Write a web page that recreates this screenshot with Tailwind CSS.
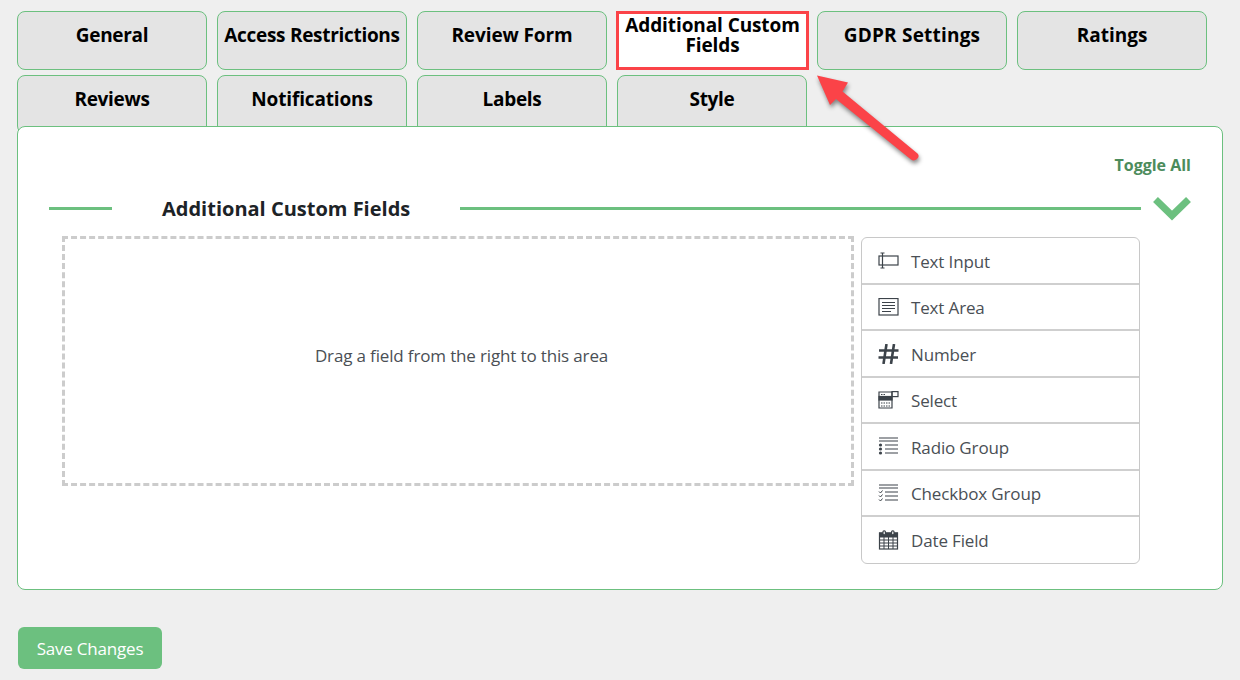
<!DOCTYPE html>
<html lang="en">
<head>
  <meta charset="UTF-8">
  <title>Additional Custom Fields</title>
  <script src="https://cdn.jsdelivr.net/npm/@tailwindcss/browser@4"></script>
</head>
<body class="bg-[#efefef] w-[1240px] h-[680px] overflow-hidden relative font-['Open_Sans',sans-serif]">
  <!-- Tabs -->
  <div class="pl-[17px] pt-[11px]">
    <div class="flex gap-[10px] h-[59px]">
      <button class="w-[190px] h-[59px] pt-[9px] flex justify-center items-start bg-[#e4e4e4] border border-[#6cc07f] rounded-[8px] text-black text-[19px] leading-[28px] font-bold tracking-[-0.3px]">General</button>
      <button class="w-[190px] h-[59px] pt-[9px] flex justify-center items-start bg-[#e4e4e4] border border-[#6cc07f] rounded-[8px] text-black text-[19px] leading-[28px] font-bold tracking-[-0.3px]">Access Restrictions</button>
      <button class="w-[190px] h-[59px] pt-[9px] flex justify-center items-start bg-[#e4e4e4] border border-[#6cc07f] rounded-[8px] text-black text-[19px] leading-[28px] font-bold tracking-[-0.1px]">Review Form</button>
      <button class="w-[193px] h-[59px] -ml-[1px] -mr-[2px] pt-[1px] flex items-start justify-center text-center bg-white border-[3px] border-[#fb4348] text-black text-[19px] leading-[20px] font-bold tracking-[-0.1px]">Additional Custom<br>Fields</button>
      <button class="w-[190px] h-[59px] pt-[9px] flex justify-center items-start bg-[#e4e4e4] border border-[#6cc07f] rounded-[8px] text-black text-[19px] leading-[28px] font-bold tracking-[0.2px]">GDPR Settings</button>
      <button class="w-[190px] h-[59px] pt-[9px] flex justify-center items-start bg-[#e4e4e4] border border-[#6cc07f] rounded-[8px] text-black text-[19px] leading-[28px] font-bold">Ratings</button>
    </div>
    <div class="flex gap-[10px] h-[51px] mt-[5px]">
      <button class="w-[190px] h-[59px] pt-[9px] flex justify-center items-start bg-[#e4e4e4] border border-[#6cc07f] rounded-[8px] text-black text-[19px] leading-[28px] font-bold tracking-[-0.3px]">Reviews</button>
      <button class="w-[190px] h-[59px] pt-[9px] flex justify-center items-start bg-[#e4e4e4] border border-[#6cc07f] rounded-[8px] text-black text-[19px] leading-[28px] font-bold tracking-[-0.15px]">Notifications</button>
      <button class="w-[190px] h-[59px] pt-[9px] flex justify-center items-start bg-[#e4e4e4] border border-[#6cc07f] rounded-[8px] text-black text-[19px] leading-[28px] font-bold tracking-[-0.3px]">Labels</button>
      <button class="w-[190px] h-[59px] pt-[9px] flex justify-center items-start bg-[#e4e4e4] border border-[#6cc07f] rounded-[8px] text-black text-[19px] leading-[28px] font-bold tracking-[-0.3px]">Style</button>
    </div>
  </div>

  <!-- Panel -->
  <div class="relative ml-[17px] w-[1206px] h-[464px] bg-white border border-[#6cc07f] rounded-[8px]">
    <div class="flex justify-end pt-[27px] pr-[31px] h-[68px]">
      <span class="text-[#4c8c5c] text-[16px] leading-[22px] font-bold">Toggle All</span>
    </div>
    <!-- Section heading -->
    <div class="flex items-center pl-[31px] h-[26px]">
      <div class="w-[63px] h-[3px] bg-[#6cc07f]"></div>
      <h2 class="w-[348px] mt-[2px] pl-[50px] text-[#1d2327] text-[20px] leading-[26px] font-bold">Additional Custom Fields</h2>
      <div class="w-[681px] h-[3px] bg-[#6cc07f]"></div>
      <svg class="ml-[12px]" width="38" height="26" viewBox="0 0 38 26" fill="none">
        <path d="M2.5 4.5 L19 20.5 L35.5 4.5" stroke="#6cc07f" stroke-width="7"/>
      </svg>
    </div>
    <div class="flex pl-[44px] pt-[15px]">
      <!-- Drop area -->
      <div class="w-[792px] h-[250px] pl-[7px] pb-[10px] border-[3px] border-dashed border-[#cccccc] flex items-center justify-center text-[#4a4f55] text-[17px] tracking-[-0.15px]">
        Drag a field from the right to this area
      </div>
      <!-- Field list -->
      <ul class="ml-[7px] w-[279px] h-[327px] mt-[1px] border border-[#c8c8c8] rounded-[6px] text-[#4a4f55] text-[17px] tracking-[-0.15px] flex flex-col">
        <li class="h-[46.5px] border-b-2 border-[#cfcfcf] flex items-center pl-[16px] gap-[12px]">
          <svg class="mt-[1px]" width="21" height="18" viewBox="0 0 21 18" fill="none" stroke="#3c434a" stroke-width="1.2"><rect x="1" y="4" width="19" height="9"/><path d="M4.5 1V16M2.500 1H6.500M2.500 16H6.500"/></svg>
          <span class="mt-[2px]">Text Input</span>
        </li>
        <li class="h-[46.5px] border-b-2 border-[#cfcfcf] flex items-center pl-[16px] gap-[12px]">
          <svg width="21" height="18" viewBox="0 0 21 18" fill="none" stroke="#3c434a" stroke-width="1.2"><rect x="1" y="0.5" width="19" height="16.5"/><path d="M4 4.5H17M4 7.5H17M4 10.5H17M4 13.5H13"/></svg>
          <span class="mt-[2px]">Text Area</span>
        </li>
        <li class="h-[46.5px] border-b-2 border-[#cfcfcf] flex items-center pl-[16px] gap-[12px]">
          <svg class="mt-[1px]" width="21" height="20" viewBox="0 0 21 20" fill="none" stroke="#3c434a" stroke-width="2.6"><path d="M8.500 0L5.500 20M16 0L13 20M1 6.500H20.500M0.500 13.500H20"/></svg>
          <span class="mt-[2px]">Number</span>
        </li>
        <li class="h-[46.5px] border-b-2 border-[#cfcfcf] flex items-center pl-[16px] gap-[12px]">
          <svg width="21" height="18" viewBox="0 0 21 18" fill="none" stroke="#3c434a" stroke-width="1.2"><path d="M1 1H14V17H1Z"/><rect x="14" y="0.6" width="6" height="5"/><rect x="1" y="5.5" width="13" height="3.5" fill="#3c434a"/><path d="M3 3.500H8M3 12H12M3 15H12" stroke-dasharray="1.5 1"/></svg>
          <span class="mt-[2px]">Select</span>
        </li>
        <li class="h-[46.5px] border-b-2 border-[#cfcfcf] flex items-center pl-[16px] gap-[12px]">
          <svg width="21" height="18" viewBox="0 0 21 18" fill="none" stroke="#3c434a" stroke-width="1.2"><path d="M1 1H20M1 4H20M7 8H20M7 12H20M7 16H20"/><circle cx="2.500" cy="8" r="1.6" fill="#3c434a" stroke="none"/><circle cx="2.500" cy="12" r="1.6" fill="#3c434a" stroke="none"/><circle cx="2.500" cy="16" r="1.6" fill="#3c434a" stroke="none"/></svg>
          <span class="mt-[2px]">Radio Group</span>
        </li>
        <li class="h-[46.5px] border-b-2 border-[#cfcfcf] flex items-center pl-[16px] gap-[12px]">
          <svg width="21" height="18" viewBox="0 0 21 18" fill="none" stroke="#3c434a" stroke-width="1.2"><path d="M1 1H20M1 4H20M7 8H20M7 12H20M7 16H20"/><path d="M1 7.500L2.500 9L4.500 6.500M1 11.500L2.500 13L4.500 10.500M1 15.500L2.500 17L4.500 14.500" stroke-width="1"/></svg>
          <span class="mt-[2px]">Checkbox Group</span>
        </li>
        <li class="h-[46px] flex items-center pl-[16px] gap-[12px]">
          <svg width="21" height="20" viewBox="0 0 21 20" fill="none" stroke="#3c434a" stroke-width="1"><rect x="1.500" y="3" width="18" height="16" stroke-width="1.2"/><rect x="1.500" y="3" width="18" height="4" fill="#3c434a"/><path d="M1.500 10H19.500M1.500 13H19.500M1.500 16H19.500M6 7V19M10.500 7V19M15 7V19"/><rect x="5" y="0.8" width="2.4" height="4" rx="1" fill="#fff" stroke-width="1.2"/><rect x="13.6" y="0.8" width="2.4" height="4" rx="1" fill="#fff" stroke-width="1.2"/></svg>
          <span class="mt-[2px]">Date Field</span>
        </li>
      </ul>
    </div>
  </div>

  <!-- Save -->
  <button class="block ml-[18px] mt-[37px] w-[144px] h-[42px] pt-[2px] bg-[#6cc07f] rounded-[6px] text-white text-[17px] tracking-[-0.2px]">Save Changes</button>

  <!-- Annotation arrow -->
  <svg class="absolute left-0 top-0 pointer-events-none drop-shadow-[1px_3px_2px_rgba(0,0,0,0.45)]" width="1240" height="680" viewBox="0 0 1240 680" fill="none">
    <path d="M817 75.500 L848 82.500 L842.500 91.500 L917.500 153.500 Q920 156 917 159 Q914 161.500 911 159.500 L836 99 L830 105 Z" fill="#fb4348"/>
  </svg>
</body>
</html>
